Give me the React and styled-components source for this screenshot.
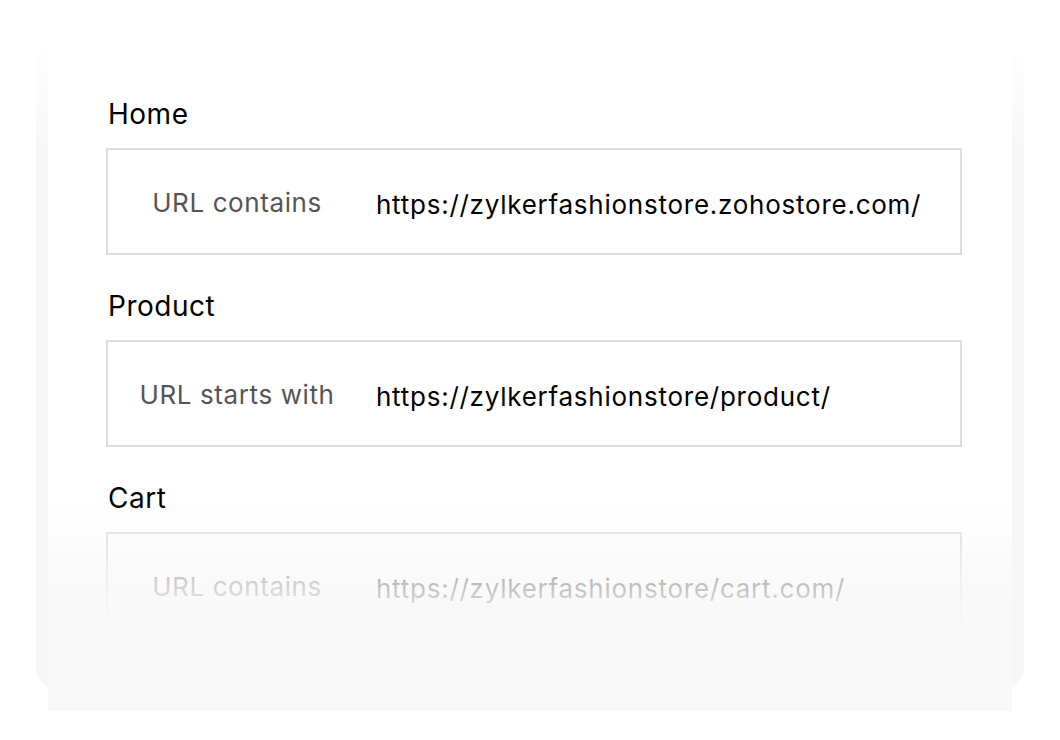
import styled, { createGlobalStyle } from 'styled-components';

const GlobalStyle = createGlobalStyle`
  html, body {
    margin: 0;
    padding: 0;
    background: #ffffff;
  }
  body {
    font-family: Inter, "Noto Sans", sans-serif;
    -webkit-font-smoothing: antialiased;
  }
`;

const rules = [
  { title: 'Home', label: 'URL contains', url: 'https://zylkerfashionstore.zohostore.com/' },
  { title: 'Product', label: 'URL starts with', url: 'https://zylkerfashionstore/product/' },
  { title: 'Cart', label: 'URL contains', url: 'https://zylkerfashionstore/cart.com/' },
];

const App = () => (
  <>
    <GlobalStyle />
    <Page>
      <Frame>
        <Card>
          {rules.map((rule) => (
            <Section key={rule.title}>
              <Title>{rule.title}</Title>
              <RuleBox>
                <Label>{rule.label}</Label>
                <Url>{rule.url}</Url>
              </RuleBox>
            </Section>
          ))}
        </Card>
      </Frame>
    </Page>
  </>
);

export default App;

const Page = styled.div`
  width: 1060px;
  height: 740px;
  padding: 42px 0 0 36px;
  box-sizing: border-box;
  overflow: hidden;
`;

const Frame = styled.div`
  width: 988px;
  height: 652px;
  padding: 0 12px;
  box-sizing: border-box;
  border-radius: 26px;
  background: linear-gradient(to bottom, #ffffff 0, #f7f7f7 110px, #f6f6f6 100%);
`;

const Card = styled.div`
  position: relative;
  height: 671px;
  margin-top: -2px;
  padding: 58px 0 0 58px;
  box-sizing: border-box;
  background: #ffffff;

  &::after {
    content: '';
    position: absolute;
    left: 0;
    right: 0;
    bottom: 0;
    height: 210px;
    background: linear-gradient(
      to bottom,
      rgba(248, 248, 248, 0) 0,
      rgba(248, 248, 248, 0.75) 80px,
      rgba(248, 248, 248, 0.97) 125px,
      #f8f8f8 100%
    );
  }
`;

const Section = styled.div`
  display: flex;
  flex-direction: column;
  margin-bottom: 35px;
`;

const Title = styled.div`
  font-size: 28px;
  line-height: 32px;
  font-weight: 400;
  letter-spacing: 0.5px;
  color: #000000;
  margin: 0 0 18px 2px;
`;

const RuleBox = styled.div`
  display: flex;
  align-items: center;
  width: 856px;
  height: 107px;
  box-sizing: border-box;
  border: 2px solid #dcdcdc;
`;

const Label = styled.div`
  width: 258px;
  flex-shrink: 0;
  margin-top: 2px;
  text-align: center;
  font-size: 26px;
  letter-spacing: 0.6px;
  color: #555555;
`;

const Url = styled.div`
  margin-top: 6px;
  font-size: 26px;
  letter-spacing: 0.75px;
  color: #000000;
  padding-left: 10px;
`;
